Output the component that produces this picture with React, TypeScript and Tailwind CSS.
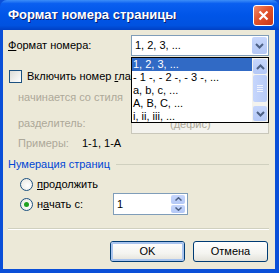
import React from "react";

const font = { fontFamily: '"Liberation Sans", Arial, sans-serif' };

function DownArrow({ className = "" }: { className?: string }) {
  return (
    <svg width="9" height="6" viewBox="0 0 9 6" className={className}>
      <path d="M1 1 L4.5 4.5 L8 1" fill="none" stroke="#4d6185" strokeWidth="2" />
    </svg>
  );
}

function UpArrow() {
  return (
    <svg width="9" height="6" viewBox="0 0 9 6">
      <path d="M1 5 L4.5 1.5 L8 5" fill="none" stroke="#4d6185" strokeWidth="2" />
    </svg>
  );
}

function XpButton({ label, focused }: { label: string; focused?: boolean }) {
  return (
    <div className="flex h-[21px] w-[75px] items-center justify-center rounded-[3px] border border-[#003c74] bg-[linear-gradient(180deg,#ffffff_0%,#f4f4f0_60%,#e3e2da_100%)] text-[11px] font-normal text-black">
      <div
        className={
          focused
            ? "flex h-full w-full items-center justify-center rounded-[2px] border-2 border-[#a9c4ee]"
            : "flex h-full w-full items-center justify-center"
        }
      >
        {label}
      </div>
    </div>
  );
}

function Radio({ checked }: { checked?: boolean }) {
  return (
    <div className="flex h-[13px] w-[13px] items-center justify-center rounded-full border border-[#1c5180] bg-[radial-gradient(circle_at_60%_60%,#ffffff_0%,#e6e5de_100%)]">
      {checked && <div className="h-[5px] w-[5px] rounded-full bg-[#21a121]" />}
    </div>
  );
}

export default function App() {
  const items = ["1, 2, 3, ...", "- 1 -, - 2 -, - 3 -, ...", "a, b, c, ...", "A, B, C, ...", "i, ii, iii, ..."];

  return (
    <div className="relative flex h-[273px] w-[279px] flex-col overflow-hidden bg-[#0a4fd8]" style={font}>
      {/* Title bar */}
      <div className="flex h-[30px] shrink-0 items-center justify-between rounded-t-[7px] bg-[linear-gradient(180deg,#3d8ef8_0%,#0a5ff0_12%,#0055e8_50%,#0052e0_85%,#0040c4_100%)] pl-[8px] pr-[5px]">
        <span className="text-[13px] font-bold text-white [text-shadow:1px_1px_0_#0a1e6e]">
          Формат номера страницы
        </span>
        <div className="flex h-[21px] w-[21px] items-center justify-center rounded-[3px] border border-white bg-[linear-gradient(135deg,#f08a6a_0%,#e2532b_45%,#c7361a_100%)]">
          <svg width="11" height="11" viewBox="0 0 11 11">
            <path d="M1.5 1.5 L9.5 9.5 M9.5 1.5 L1.5 9.5" stroke="white" strokeWidth="2.2" />
          </svg>
        </div>
      </div>

      {/* Body */}
      <div className="ml-[3px] mr-[4px] flex h-[239px] flex-col bg-[#ece9d8] pl-[5px] pr-[6px] text-[11px] text-black">
        {/* Format row */}
        <div className="mt-[5px] flex h-[21px] items-center justify-between">
          <span>
            <u>Ф</u>ормат номера:
          </span>
          <div className="flex h-[21px] w-[138px] items-center justify-between border border-[#7f9db9] bg-white pl-[3px] pr-[1px]">
            <span>1, 2, 3, ...</span>
            <div className="flex h-[17px] w-[15px] items-center justify-center rounded-[2px] bg-[linear-gradient(180deg,#c6d6fc_0%,#b4c8f6_100%)]">
              <DownArrow />
            </div>
          </div>
        </div>

        {/* Checkbox (label is cut off by the open list) */}
        <div className="mt-[12px] flex h-[17px] items-center gap-[5px] pl-[1px]">
          <div className="h-[13px] w-[13px] shrink-0 border border-[#1c5180] bg-[linear-gradient(135deg,#dcdcd7_0%,#ffffff_100%)]" />
          <span className="w-[104px] overflow-hidden whitespace-nowrap">
            Включить номер <u>г</u>лавы
          </span>
        </div>

        {/* Chapter starts with style */}
        <div className="mt-[2px] flex h-[21px] items-center justify-between pl-[10px] text-[#aca899]">
          <span>начинается со стиля</span>
          <div className="h-[21px] w-[138px] border border-[#c9c7ba] bg-[#f4f3ee]" />
        </div>

        {/* Separator */}
        <div className="mt-[5px] flex h-[21px] items-center justify-between pl-[10px] text-[#aca899]">
          <span>разделитель:</span>
          <div className="flex h-[21px] w-[138px] items-end overflow-hidden border border-[#c9c7ba] bg-[#f4f3ee] pb-[2px] pl-[38px]">
            <span className="leading-[13px]">(дефис)</span>
          </div>
        </div>

        {/* Examples */}
        <div className="mt-[2px] flex h-[15px] items-center pl-[10px]">
          <span className="w-[64px] text-[#aca899]">Примеры:</span>
          <span>1-1, 1-A</span>
        </div>

        {/* Group heading */}
        <div className="mt-[6px] flex h-[14px] items-center gap-[6px]">
          <span className="text-[#0046d5]">Нумерация страниц</span>
          <div className="h-px flex-1 bg-[#d0d0bf]" />
        </div>

        {/* Radio continue */}
        <div className="mt-[5px] flex h-[16px] items-center gap-[4px] pl-[12px]">
          <Radio />
          <span>
            <u>п</u>родолжить
          </span>
        </div>

        {/* Radio start at */}
        <div className="mt-[1px] flex h-[22px] items-center pl-[12px]">
          <Radio checked />
          <span className="ml-[4px] w-[76px]">
            н<u>а</u>чать с:
          </span>
          <div className="flex h-[22px] w-[75px] items-center justify-between border border-[#7f9db9] bg-white pl-[3px] pr-[2px]">
            <span>1</span>
            <div className="flex h-[18px] w-[14px] flex-col gap-px">
              <div className="flex flex-1 items-center justify-center rounded-[2px] bg-[linear-gradient(180deg,#c6d6fc_0%,#b4c8f6_100%)]">
                <svg width="7" height="4" viewBox="0 0 7 4">
                  <path d="M0.5 3.5 L3.5 0.8 L6.5 3.5" fill="none" stroke="#4d6185" strokeWidth="1.5" />
                </svg>
              </div>
              <div className="flex flex-1 items-center justify-center rounded-[2px] bg-[linear-gradient(180deg,#c6d6fc_0%,#b4c8f6_100%)]">
                <svg width="7" height="4" viewBox="0 0 7 4">
                  <path d="M0.5 0.5 L3.5 3.2 L6.5 0.5" fill="none" stroke="#4d6185" strokeWidth="1.5" />
                </svg>
              </div>
            </div>
          </div>
        </div>

        {/* Divider */}
        <div className="mt-[13px] h-px bg-[#d0d0bf]" />
        <div className="h-px bg-white" />

        {/* Buttons */}
        <div className="mt-[11px] flex justify-end gap-[8px] pr-[1px]">
          <XpButton label="OK" focused />
          <XpButton label="Отмена" />
        </div>
      </div>
      <div className="flex-1" />

      {/* Open dropdown list */}
      <div className="absolute left-[131px] top-[57px] flex h-[66px] w-[138px] border border-black bg-white text-[11px] text-black">
        <div className="flex flex-1 flex-col">
          {items.map((it, i) => (
            <div
              key={it}
              className={
                i === 0
                  ? "flex h-[13px] items-center bg-[#316ac5] pl-[1px] text-white"
                  : "flex h-[13px] items-center pl-[1px]"
              }
            >
              {it}
            </div>
          ))}
        </div>
        <div className="flex w-[16px] flex-col bg-[#f4f3ee] p-px">
          <div className="flex h-[15px] items-center justify-center rounded-[2px] bg-[linear-gradient(180deg,#c6d6fc_0%,#b4c8f6_100%)]">
            <UpArrow />
          </div>
          <div className="mt-px flex h-[27px] flex-col items-center justify-center gap-px rounded-[2px] bg-[linear-gradient(90deg,#c6d6fc_0%,#b8cbf7_100%)]">
            <div className="h-px w-[6px] bg-[#eef2fd]" />
            <div className="h-px w-[6px] bg-[#eef2fd]" />
            <div className="h-px w-[6px] bg-[#eef2fd]" />
            <div className="h-px w-[6px] bg-[#eef2fd]" />
          </div>
          <div className="flex-1" />
          <div className="flex h-[15px] items-center justify-center rounded-[2px] bg-[linear-gradient(180deg,#c6d6fc_0%,#b4c8f6_100%)]">
            <DownArrow />
          </div>
        </div>
      </div>
    </div>
  );
}
